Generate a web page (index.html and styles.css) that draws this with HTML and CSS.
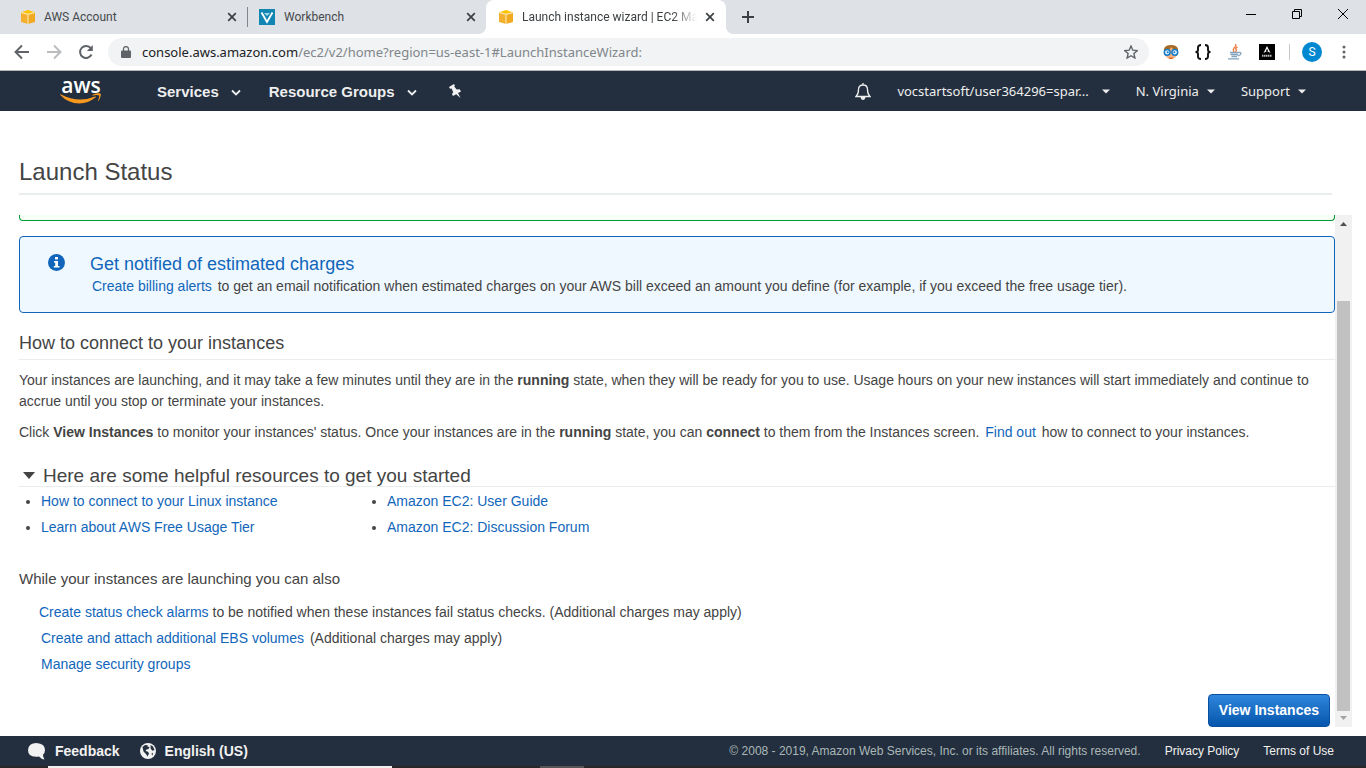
FILE: index.html
```html
<!DOCTYPE html>
<html lang="en">
<head>
<meta charset="utf-8">
<title>Launch instance wizard | EC2 Management Console</title>
<link rel="stylesheet" href="styles.css">
</head>
<body>
<svg class="defs" aria-hidden="true">
  <symbol id="cube" viewBox="0 0 14 14">
    <path d="M0 2.6 7 4v10L0 12z" fill="#f2b02e"/><path d="M14 2.6 7 4v10l7-2z" fill="#f2a922"/>
    <path d="M0 2.2 7 0l7 2.2L7 4z" fill="#ffc400"/><path d="M.5 2.7 7 4.3l6.500-1.600M7 4.300V14" stroke="#fbe3a6" stroke-width="1.200" fill="none"/>
  </symbol>
  <symbol id="close" viewBox="0 0 10 10"><path d="m1.200 1.200 7.600 7.600M8.800 1.200 1.200 8.800" stroke="#3c4043" stroke-width="1.700"/></symbol>
  <symbol id="chevron" viewBox="0 0 10 7"><path d="m1 1.500 4 4 4-4" stroke="#eee" stroke-width="1.800" fill="none"/></symbol>
  <symbol id="caret" viewBox="0 0 8 5"><path d="M0 .5h8L4 4.500z" fill="#eee"/></symbol>
</svg>

<div class="tabs">
  <div class="tab">
    <svg class="fav" width="14" height="14"><use href="#cube"/></svg><span class="tab-name">AWS Account</span>
    <button class="x" aria-label="Close tab"><svg width="10" height="10"><use href="#close"/></svg></button>
  </div>
  <div class="tab second">
    <svg class="fav" width="16" height="16" viewBox="0 0 16 16"><path fill="#1286b3" d="M0 0h16v16H0z"/><path d="M2.500 3.500 8 13l5.500-9.500" stroke="#fff" stroke-width="1.800" fill="none"/><path d="M5 4h6L8 7z" fill="#a8d5e7"/></svg><span class="tab-name">Workbench</span>
    <button class="x" aria-label="Close tab"><svg width="10" height="10"><use href="#close"/></svg></button>
  </div>
  <div class="tab active">
    <svg class="fav" width="14" height="14"><use href="#cube"/></svg><span class="tab-name fade">Launch instance wizard | EC2 Man</span>
    <button class="x" aria-label="Close tab"><svg width="10" height="10"><use href="#close"/></svg></button>
  </div>
  <button class="new" aria-label="New tab"><svg width="12" height="12" viewBox="0 0 12 12"><path d="M6 0v12M0 6h12" stroke="#3c4043" stroke-width="2"/></svg></button>
  <div class="win">
    <button aria-label="Minimize"><svg width="10" height="10" viewBox="0 0 10 10"><path d="M0 5.500h10" stroke="#000"/></svg></button>
    <button aria-label="Restore"><svg width="10" height="10" viewBox="0 0 10 10"><path d="M.5 2.500h7v7h-7zM2.500 2.500v-2h7v7h-2" stroke="#000" fill="none"/></svg></button>
    <button aria-label="Close"><svg width="10" height="10" viewBox="0 0 10 10"><path d="m0 0 10 10M10 0 0 10" stroke="#000"/></svg></button>
  </div>
</div>

<div class="toolbar">
  <button aria-label="Back"><svg width="16" height="16" viewBox="0 0 16 16"><path d="M15 8H2M8 1.500 1.500 8 8 14.500" stroke="#5f6368" stroke-width="1.900" fill="none"/></svg></button>
  <button aria-label="Forward"><svg width="16" height="16" viewBox="0 0 16 16"><path d="M1 8h13M8 1.500 14.500 8 8 14.500" stroke="#babcbe" stroke-width="1.900" fill="none"/></svg></button>
  <button aria-label="Reload"><svg width="16" height="16" viewBox="0 0 16 16"><path d="M13.500 10.500A6 6 0 1 1 12.800 4.200" stroke="#5f6368" stroke-width="2" fill="none"/><path d="M14.800 1v6H8.800z" fill="#5f6368"/></svg></button>
  <div class="address">
    <svg width="10" height="12" viewBox="0 0 10 12"><path d="M1 4.500h8q1 0 1 1V11q0 1-1 1H1q-1 0-1-1V5.500q0-1 1-1z" fill="#5f6368"/><path d="M2.500 5V3a2.500 2.400 0 0 1 5 0v2" stroke="#5f6368" stroke-width="1.300" fill="none"/></svg>
    <span class="url"><b>console.aws.amazon.com</b>/ec2/v2/home?region=us-east-1#LaunchInstanceWizard:</span>
    <button aria-label="Bookmark"><svg width="14" height="14" viewBox="0 0 14 14"><path d="m7 1 1.800 4.200 4.500.4-3.400 3 1 4.400L7 10.700 3.100 13l1-4.400-3.400-3 4.500-.4z" stroke="#5f6368" stroke-width="1.400" fill="none"/></svg></button>
  </div>
  <div class="ext">
    <svg width="16" height="16" viewBox="0 0 16 16"><path d="M1 9V5Q2 1 8 1t7 4v4l-1 3H2z" fill="#a56a25"/><path d="M2 7q5 0 6-4 2 3 6 4v4q-2 4-6 4t-6-4z" fill="#f3b184"/><path d="M5.500 13.500h5l-1 1.500h-3z" fill="#e6692c"/><circle cx="4.200" cy="8.300" r="2.900" fill="#e6f5ff" stroke="#167cc9" stroke-width="1.500"/><circle cx="11.800" cy="8.300" r="2.900" fill="#e6f5ff" stroke="#167cc9" stroke-width="1.500"/><circle cx="4.700" cy="8.300" r="1" fill="#167cc9"/><circle cx="11.300" cy="8.300" r="1" fill="#167cc9"/></svg>
    <svg width="16" height="16" viewBox="0 0 16 16"><path d="M6 1Q3 1 3 3.500V6Q3 8 .5 8q2.500 0 2.500 2v2.500Q3 15 6 15M10 1q3 0 3 2.500V6q0 2 2.500 2-2.500 0-2.500 2v2.500q0 2.500-3 2.500" stroke="#111" stroke-width="1.900" fill="none"/></svg>
    <svg width="16" height="16" viewBox="0 0 16 16"><path d="M8.500 0q1 2-1 3.500T7 8M10.500 3Q7.500 4.500 9.500 6L8.500 8" stroke="#ee8145" stroke-width="1.400" fill="none"/><path d="M3 8.500h8.500M3.500 10.500h7.500M4.500 12.500h5.500M1 14.800h11M11.500 8.500q3.500-.5 2 2L10.800 12" stroke="#80a2bd" stroke-width="1.300" fill="none"/></svg>
    <svg width="16" height="16" viewBox="0 0 16 16"><path d="M0 0h16v16H0z"/><path d="m8 2-3.500 7L8 7l3.500 2z" fill="#fff"/><path d="M8 4.500 7 7h2z"/><path d="M3 11.800h10" stroke="#bbb" stroke-width="2" stroke-dasharray="1.500 .5"/></svg>
  </div>
  <span class="rule"></span>
  <button class="avatar">S</button>
  <button class="more" aria-label="Menu"><svg width="4" height="14" viewBox="0 0 4 14"><g fill="#5f6368"><circle cx="2" cy="2" r="1.500"/><circle cx="2" cy="7" r="1.500"/><circle cx="2" cy="12" r="1.500"/></g></svg></button>
</div>

<header class="nav">
  <a class="logo" href="#" aria-label="AWS home"><span>aws</span><svg width="42" height="11" viewBox="0 0 42 11"><path d="M0 1.800q.3-.7 1-.3 17.500 9 34 2 1.500-.3.800.8Q28 10.500 19.500 10.500 8 10.500 0 1.800z" fill="#f7981f"/><path d="M32.500 1.800Q36.500-.6 40.300.6q1.600.9-1.300 6.700-1 1.200-.9 0 1.500-4 1-4.700-.8-.9-6.100-.2-1 0-.5-.6z" fill="#f7981f"/></svg></a>
  <button class="major">Services<svg width="10" height="7"><use href="#chevron"/></svg></button>
  <button class="major">Resource Groups<svg width="10" height="7"><use href="#chevron"/></svg></button>
  <button aria-label="Pin"><svg width="14" height="14" viewBox="0 0 14 14"><path d="M1 3 6 0l.9 1.600-.7.900 2.500 3 3-.3 1.300 2.200-3 1.700L12.500 14 8.200 10.200 5 12l-1-2 1.200-1.800L3.600 4.500 2 4.700z" fill="#f2f2f2"/></svg></button>
  <div class="account">
    <button class="bell" aria-label="Notifications"><svg width="16" height="17" viewBox="0 0 16 17"><path d="M1 13.500q2.500-2.200 2.500-7Q3.500 2 8 2t4.500 4.500q0 4.800 2.500 7zM8 2V0" stroke="#eee" stroke-width="1.300" fill="none"/><path d="M5.500 14h5Q10 17 8 17t-2.500-3z" fill="#eee"/></svg></button>
    <button>vocstartsoft/user364296=spar...<svg class="wide" width="8" height="5"><use href="#caret"/></svg></button>
    <button>N. Virginia<svg width="8" height="5"><use href="#caret"/></svg></button>
    <button>Support<svg width="8" height="5"><use href="#caret"/></svg></button>
  </div>
</header>

<main>
  <h1>Launch Status</h1>
  <div class="viewport">
    <div class="content">
      <div class="success"></div>
      <section class="notice">
        <svg width="17" height="17" viewBox="0 0 17 17"><circle cx="8.500" cy="8.500" r="8.500" fill="#1166bb"/><path d="M7 3h3v2.500H7zM6 7h4v5h1.500v1.500H5.800V12h1.400V8.500H6z" fill="#fff"/></svg>
        <div>
          <h2>Get notified of estimated charges</h2>
          <p><a class="ext-link" href="#">Create billing alerts</a> to get an email notification when estimated charges on your AWS bill exceed an amount you define (for example, if you exceed the free usage tier).</p>
        </div>
      </section>
      <h3>How to connect to your instances</h3>
      <p class="para">Your instances are launching, and it may take a few minutes until they are in the <b>running</b> state, when they will be ready for you to use. Usage hours on your new instances will start immediately and continue to accrue until you stop or terminate your instances.</p>
      <p class="para">Click <b>View Instances</b> to monitor your instances' status. Once your instances are in the <b>running</b> state, you can <b>connect</b> to them from the Instances screen. <a class="ext-link" href="#">Find out</a> how to connect to your instances.</p>
      <h2 class="resources"><svg width="12" height="7" viewBox="0 0 12 7"><path d="M0 0h12L6 7z" fill="#444"/></svg>Here are some helpful resources to get you started</h2>
      <div class="lists">
        <ul><li><a href="#">How to connect to your Linux instance</a></li><li><a href="#">Learn about AWS Free Usage Tier</a></li></ul>
        <ul><li><a href="#">Amazon EC2: User Guide</a></li><li><a href="#">Amazon EC2: Discussion Forum</a></li></ul>
      </div>
      <p class="also">While your instances are launching you can also</p>
      <ul class="actions">
        <li><a href="#">Create status check alarms</a> to be notified when these instances fail status checks. (Additional charges may apply)</li>
        <li><a class="ext-link" href="#">Create and attach additional EBS volumes</a> (Additional charges may apply)</li>
        <li><a class="ext-link" href="#">Manage security groups</a></li>
      </ul>
      <div class="submit"><button>View Instances</button></div>
    </div>
    <div class="scrollbar" aria-hidden="true">
      <svg width="7" height="4" viewBox="0 0 7 4"><path d="M3.500 0 7 4H0z" fill="#505050"/></svg>
      <div class="thumb"></div>
      <svg width="7" height="4" viewBox="0 0 7 4"><path d="M3.500 4 7 0H0z" fill="#a3a3a3"/></svg>
    </div>
  </div>
</main>

<footer>
  <button><svg width="18" height="17" viewBox="0 0 18 17"><path d="M8.500 0Q17 .5 17 7q0 3-2 4.700 0 3 1.500 4.800-3.500-.5-5.500-3Q0 15 0 7 .5 0 8.500 0z" fill="#f2f2f2"/></svg>Feedback</button>
  <button><svg width="16" height="16" viewBox="0 0 16 16"><circle cx="8" cy="8" r="8" fill="#f2f2f2"/><path d="M2.500 4 5 2l3 .3-.8 1.200L9.500 4l-1 2-2 .5L5.500 8 8 8.800l1 1.700-1.500 3L6 11 3.500 8.500zM10.500 2l2.500 1.500 1.500 3.500-2 .8-1.800-2zM11.500 10.500l1.700-.8-1 3z" fill="#232f3e"/></svg>English (US)</button>
  <div class="legal"><span>© 2008 - 2019, Amazon Web Services, Inc. or its affiliates. All rights reserved.</span><a href="#">Privacy Policy</a><a href="#">Terms of Use</a></div>
</footer>
<div class="taskbar"><i class="search"></i><i class="app"></i></div>
</body>
</html>
```
FILE: styles.css
```css
* { box-sizing: border-box; }
body {
  margin: 0;
  height: 100vh;
  display: flex;
  flex-direction: column;
  overflow: hidden;
  background: #fff;
  color: #444;
  font: 14px/21px "Liberation Sans", Arial, sans-serif;
}
.defs { display: none; }
svg { flex: none; display: block; }
button {
  display: flex;
  align-items: center;
  padding: 0;
  border: 0;
  background: none;
  color: inherit;
  font: inherit;
  white-space: nowrap;
}
a { color: #1166bb; text-decoration: none; }
h1, h2, h3, p, ul { margin: 0; padding: 0; font-weight: 400; }

/* browser tabs */
.tabs {
  flex: none;
  display: flex;
  height: 34px;
  background: #dee1e6;
  color: #45494d;
  font: 12px/16px Roboto, sans-serif;
}
.tab { display: flex; align-items: center; width: 247px; padding: 0 10px 0 21px; }
.tab.second { position: relative; width: 239px; padding-left: 12px; }
.tab.second::before { content: ""; position: absolute; left: 0; top: 7px; height: 20px; width: 1px; background: #80868b; }
.tab.active { width: 240px; padding: 0 11px 0 13px; border-radius: 8px 8px 0 0; background: #fff; color: #3c4043; position: relative; }
.tab.active::before, .tab.active::after { content: ""; position: absolute; bottom: 0; width: 8px; height: 8px; }
.tab.active::before { left: -8px; background: radial-gradient(circle at 0 0, #dee1e6 8px, #fff 8px); }
.tab.active::after { right: -8px; background: radial-gradient(circle at 100% 0, #dee1e6 8px, #fff 8px); }
.tab-name { flex: 1; margin: 0 8px 0 9px; overflow: hidden; white-space: nowrap; }
.fade { mask-image: linear-gradient(to right, #000 86%, transparent); }
.new { margin-left: 16px; }
.win { display: flex; gap: 36px; margin-left: auto; padding: 0 18px 6px 0; }

/* browser toolbar */
.toolbar {
  flex: none;
  display: flex;
  align-items: center;
  gap: 16px;
  height: 37px;
  padding: 0 20px 1px 14px;
  border-bottom: 1px solid #b6b6b6;
}
.address {
  flex: 1;
  display: flex;
  align-items: center;
  height: 28px;
  margin-left: -2px;
  padding: 0 11px 0 13px;
  border-radius: 14px;
  background: #f1f3f4;
  color: #80868b;
}
.url { flex: 1; margin-left: 11px; font: 13px/20px "Noto Sans", sans-serif; white-space: nowrap; overflow: hidden; }
.url b { font-weight: 400; color: #202124; }
.ext { display: flex; gap: 16px; margin: 0 2px 0 -2px; }
.rule { width: 1px; height: 16px; margin: 0 -4px; background: #c6c8ca; }
.avatar { justify-content: center; width: 20px; height: 20px; border-radius: 10px; background: #0288d1; color: #fff; font: 12px/20px Roboto, sans-serif; }
.more { margin-left: 4px; }

/* console header */
.nav {
  flex: none;
  display: flex;
  align-items: center;
  height: 40px;
  padding: 0 60px;
  background: #232f3e;
  color: #eee;
}
.logo { display: flex; flex-direction: column; margin-right: 55px; padding-bottom: 2px; color: #fff; font: 600 21px/16px "Open Sans", sans-serif; text-align: center; }
.major { margin-right: 28px; font-weight: 700; font-size: 15px; }
.major svg { margin: 3px 0 0 12px; }
.major + [aria-label] { margin-left: 3px; }
.account { display: flex; align-items: center; gap: 26px; margin-left: auto; font: 13px/20px "Noto Sans", sans-serif; }
.account button svg { margin-left: 8px; }
.account .wide { margin-left: 13px; }
.account .bell svg { margin: 0; }

/* page */
main { flex: 1; min-height: 0; display: flex; flex-direction: column; padding: 42px 14px 9px 19px; }
h1 { flex: none; height: 42px; margin-right: 20px; border-bottom: 2px solid #eaeded; font-size: 24px; line-height: 38px; }
.viewport { flex: 1; min-height: 0; display: flex; margin-top: 20px; }
.content { flex: 1; min-width: 0; overflow: hidden; }
.success { height: 6px; border: 1px solid #093; border-top: 0; border-radius: 0 0 4px 4px; background: #f5fff5; }
.notice { display: flex; gap: 25px; height: 77px; margin-top: 15px; padding: 17px 28px; border: 1px solid #16b; border-radius: 4px; background: #f0f8ff; }
.notice h2 { height: 22px; color: #16b; font-size: 18px; line-height: 20px; }
.ext-link { margin: 0 2px; }
h3 { margin-top: 16px; height: 31px; border-bottom: 1px solid #eaeded; font-size: 18px; line-height: 28px; }
.para { margin-top: 10px; }
.resources { display: flex; align-items: center; gap: 8px; height: 22px; margin-top: 22px; padding-left: 4px; border-bottom: 1px solid #eaeded; font-size: 19px; line-height: 22px; }
.lists { display: flex; margin-top: 1px; line-height: 26px; }
.lists ul { width: 346px; padding-left: 22px; }
.also { margin-top: 28px; font-size: 15px; }
.actions { margin-top: 10px; padding-left: 20px; line-height: 26px; list-style: none; }
.submit { display: flex; justify-content: flex-end; margin-top: 17px; padding-right: 5px; }
.submit button { height: 33px; padding: 0 10px; border: 1px solid #0a50a1; border-radius: 4px; background: linear-gradient(#2f86dc, #0556ac); color: #fff; font-weight: 700; }
.scrollbar { flex: none; display: flex; flex-direction: column; align-items: center; width: 17px; padding: 7px 0; background: #f1f1f1; }
.thumb { flex: 1; width: 13px; margin: 75px 0 5px; background: #c1c1c1; }

/* console footer */
footer { flex: none; display: flex; align-items: center; gap: 20px; height: 30px; padding: 0 32px 0 28px; background: #232f3e; color: #f2f2f2; }
footer button { gap: 9px; font-weight: 700; }
.legal { display: flex; gap: 24px; margin-left: auto; color: #aab7b8; font-size: 12px; white-space: nowrap; }
.legal a { color: #f2f2f2; }
.taskbar { flex: none; display: flex; height: 2px; padding-left: 48px; background: #292727; }
.search { width: 344px; background: #f2efef; }
.app { width: 44px; margin-left: 148px; background: #555; }
```
